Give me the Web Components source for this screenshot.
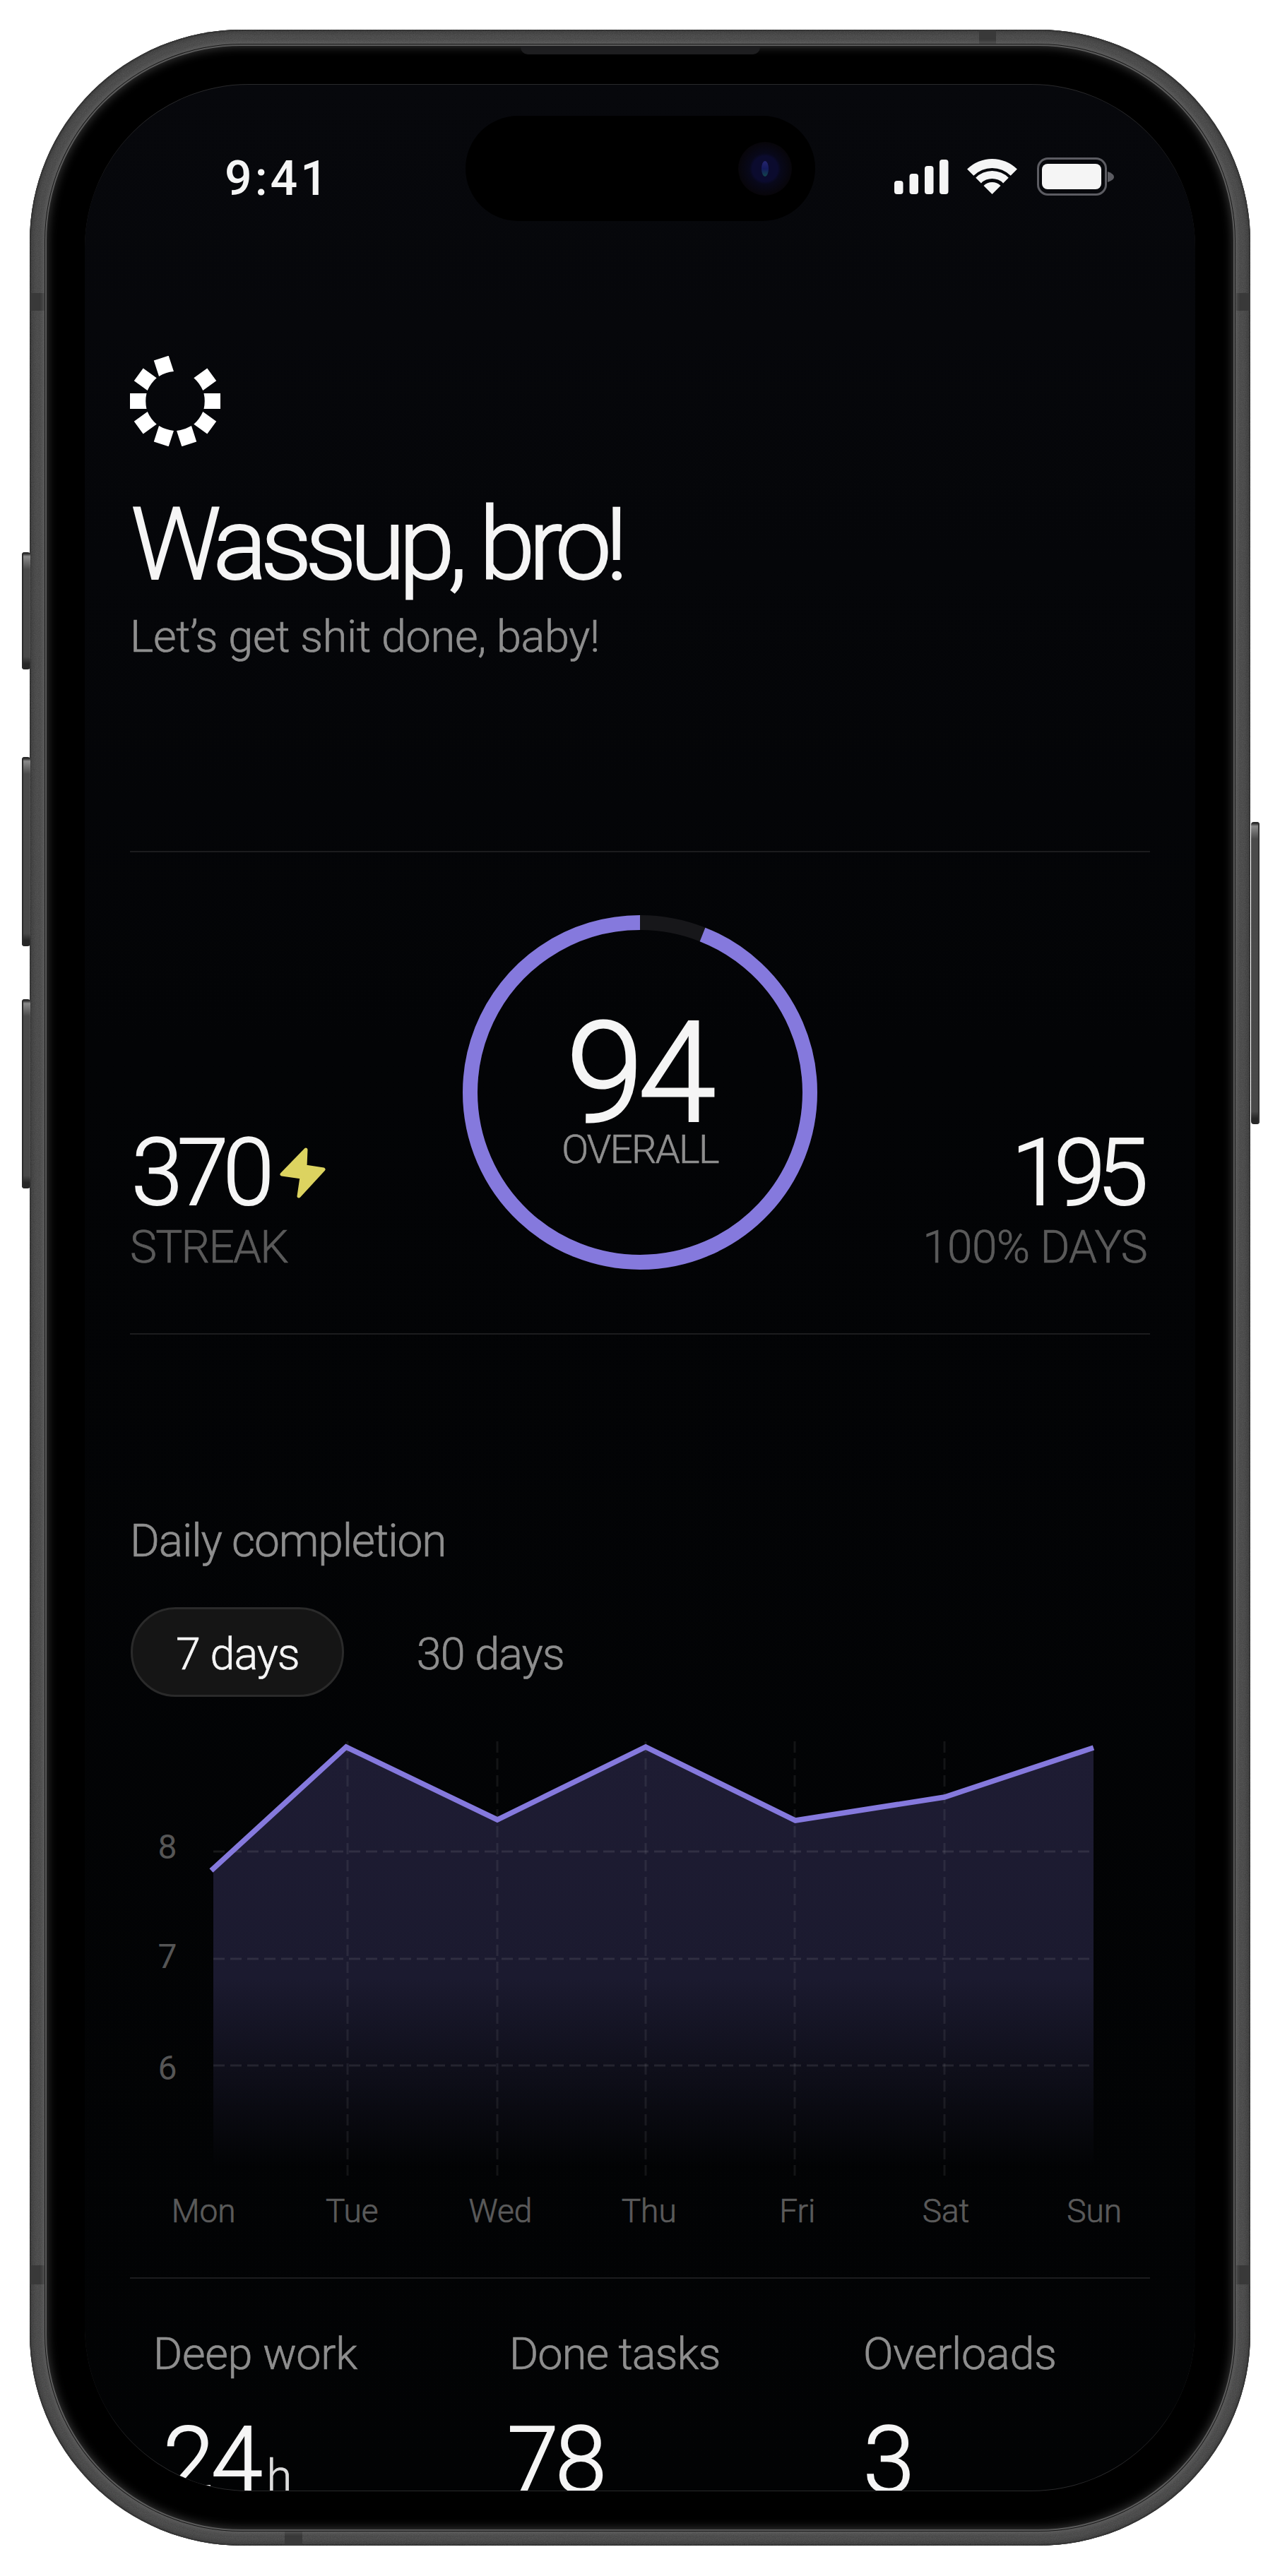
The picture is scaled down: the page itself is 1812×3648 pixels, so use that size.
<!DOCTYPE html>
<html lang="en">
<head>
<meta charset="utf-8">
<title>Daily</title>
<style>
  html, body { margin: 0; background: #fff; }
  body { font-family: Roboto, "Liberation Sans", sans-serif; font-weight: 300; color: #f5f5f5; }
  svg[slot] { display: block; }
</style>
</head>
<body>

<phone-frame>
  <status-bar></status-bar>
  <app-header>
    <span slot="title">Wassup, bro!</span>
    <span slot="subtitle">Let’s get shit done, baby!</span>
  </app-header>
  <score-panel>
    <stat-block slot="left">
      <span slot="value">370</span>
      <svg slot="icon" width="65" height="72" viewBox="0 0 65 72"><path d="M37 3 3 38 31 42 27 69 62 31 36 27Z" fill="#dcd360" stroke="#dcd360" stroke-width="5" stroke-linejoin="round"/></svg>
      <span slot="label">STREAK</span>
    </stat-block>
    <score-ring value="94" label="OVERALL"></score-ring>
    <stat-block slot="right" align="right">
      <span slot="value" style="letter-spacing:-0.09em">195</span>
      <span slot="label" style="letter-spacing:-0.01em;margin-right:-10px">100% DAYS</span>
    </stat-block>
  </score-panel>
  <completion-chart></completion-chart>
  <summary-row>
    <summary-stat>
      <span slot="label">Deep work</span>
      <span slot="value" style="margin-left:14px">24</span>
      <span slot="unit">h</span>
      <value-mask slot="mask"></value-mask>
    </summary-stat>
    <summary-stat>
      <span slot="label" style="letter-spacing:-0.015em">Done tasks</span>
      <span slot="value" style="margin-left:-3px">78</span>
    </summary-stat>
    <summary-stat>
      <span slot="label">Overloads</span>
      <span slot="value">3</span>
    </summary-stat>
  </summary-row>
</phone-frame>

<script>
class PhoneFrame extends HTMLElement {
  constructor() {
    super();
    this.attachShadow({ mode: 'open' });
    this.shadowRoot.innerHTML = `
      <style>
        :host {
          display: block;
          position: relative;
          box-sizing: border-box;
          width: 1728px;
          height: 3563px;
          margin: 42px 0 0 42px;
          padding: 21px 22px;
          border-radius: 300px;
          background: #454545;
          box-shadow: inset 0 0 0 2px #2b2b2b, inset 0 0 6px 5px #363636;
        }
        .grain {
          position: absolute;
          inset: 0;
          width: 100%;
          height: 100%;
          opacity: 0.16;
          clip-path: inset(0 round 300px);
        }
        .bezel {
          box-sizing: border-box;
          position: relative;
          height: 100%;
          padding: 56px;
          border-radius: 278px;
          background: #000;
          box-shadow: 0 0 0 1px #1a1a1a, 0 0 4px 4px rgba(105, 105, 105, 0.5), inset 0 0 0 2px #5a5a5a, inset 0 0 14px 3px #3a3a3a;
        }
        .screen {
          box-sizing: border-box;
          position: relative;
          height: 3409px;
          padding: 0 64px;
          overflow: hidden;
          border-radius: 232px;
          border-top: 1px solid #2a2a2c;
          border-bottom: 1px solid #2a2a2c;
          background: linear-gradient(#07080c, #030406 40%, #020304);
        }
        .slot-top {
          position: absolute;
          left: 695px;
          top: 23px;
          width: 339px;
          height: 12px;
          border-radius: 0 0 10px 10px;
          background: #1e1e20;
        }
        .island {
          position: absolute;
          left: 539px;
          top: 44px;
          width: 495px;
          height: 149px;
          border-radius: 75px;
          background: #000;
        }
        .camera {
          position: absolute;
          right: 33px;
          top: 37px;
          width: 76px;
          height: 76px;
          border-radius: 50%;
          background: radial-gradient(circle, #0b0b2e 0 18px, #08081a 22px, #070509 38px);
        }
        .camera::after {
          content: "";
          position: absolute;
          left: 33px;
          top: 27px;
          width: 10px;
          height: 22px;
          border-radius: 50%;
          background: linear-gradient(#25256e, #141a5c 50%, #12464a);
        }
        .band {
          position: absolute;
          background: #393939;
        }
        .btn {
          position: absolute;
          width: 12px;
          border-radius: 4px;
          background: linear-gradient(#2a2a2a 0 2px, #8a8a8a 6px, #4a4a4a 24px, #484848 calc(100% - 18px), #262626 calc(100% - 8px));
          box-shadow: inset 2px 0 0 #2a2a2a;
        }
        .btn.l { left: -11px; }
        .btn.r { right: -13px; box-shadow: inset -2px 0 0 #333; }
      </style>
      <i class="btn l" style="top:740px;height:166px"></i>
      <i class="btn l" style="top:1030px;height:268px"></i>
      <i class="btn l" style="top:1373px;height:268px"></i>
      <i class="btn r" style="top:1122px;height:428px"></i>
      <svg class="grain" aria-hidden="true">
        <filter id="noise"><feTurbulence type="fractalNoise" baseFrequency="0.8" numOctaves="2"/><feColorMatrix type="saturate" values="0"/></filter>
        <rect width="100%" height="100%" filter="url(#noise)"/>
      </svg>
      <i class="band" style="left:0;top:373px;width:22px;height:25px"></i>
      <i class="band" style="right:0;top:373px;width:20px;height:25px"></i>
      <i class="band" style="left:0;top:3166px;width:22px;height:27px"></i>
      <i class="band" style="right:0;top:3166px;width:20px;height:27px"></i>
      <i class="band" style="left:1344px;top:0;width:24px;height:21px"></i>
      <i class="band" style="left:361px;bottom:0;width:25px;height:21px"></i>
      <div class="bezel">
        <div class="screen">
          <div class="island"><div class="camera"></div></div>
          <slot></slot>
        </div>
      </div>
      <div class="slot-top"></div>
    `;
  }
}

class StatusBar extends HTMLElement {
  constructor() {
    super();
    this.attachShadow({ mode: 'open' });
    this.shadowRoot.innerHTML = `
      <style>
        :host {
          display: flex;
          position: relative;
          justify-content: space-between;
          align-items: flex-start;
          height: 66px;
          padding: 100px 51px 0 134px;
        }
        .time {
          font-size: 68px;
          line-height: 66px;
          font-weight: 500;
          letter-spacing: 4px;
        }
        svg { display: block; }
      </style>
      <div class="time">9:41</div>
      <svg width="311" height="58" viewBox="1266 220 311 58" fill="#f5f5f5">
        <rect x="1266" y="256" width="12.5" height="19" rx="4"/>
        <rect x="1287.5" y="246" width="12.5" height="29" rx="4"/>
        <rect x="1309" y="235" width="12.5" height="40" rx="4"/>
        <rect x="1330" y="226" width="12.5" height="49" rx="4"/>
        <path d="M1369.100 239.600A50 50 0 0 1 1439.900 239.600L1430.700 248.800A37 37 0 0 0 1378.300 248.800Z"/>
        <path d="M1381.200 251.700A33 33 0 0 1 1427.800 251.700L1420.100 259.400A22 22 0 0 0 1388.900 259.400Z"/>
        <path d="M1392.500 263A17 17 0 0 1 1416.500 263L1404.500 275Z"/>
        <rect x="1469.500" y="224.500" width="96" height="51" rx="14" fill="none" stroke="#5c5c62" stroke-width="3"/>
        <rect x="1475" y="232" width="84" height="36" rx="8"/>
        <path d="M1568 243Q1577 246 1577 250.500Q1577 255 1568 258Z" fill="#5c5c62"/>
      </svg>
    `;
  }
}

class AppHeader extends HTMLElement {
  constructor() {
    super();
    this.attachShadow({ mode: 'open' });
    const segments = [-162, -126, -90, -54, -18, 54, 90, 126, 162]
      .map(a => `<path transform="rotate(${a})" d="M-11-64H11V-40.500Q0-43-11-40.500Z"/>`)
      .join('');
    this.shadowRoot.innerHTML = `
      <style>
        :host {
          display: block;
          padding-top: 218px;
          padding-bottom: 268px;
        }
        svg { display: block; }
        .title {
          margin: 64px 0 0 1px;
          font-size: 143px;
          line-height: 150px;
          letter-spacing: -0.065em;
          white-space: nowrap;
          -webkit-text-stroke: 2px;
        }
        .subtitle {
          margin-top: 21px;
          font-size: 63px;
          line-height: 70px;
          letter-spacing: -0.005em;
          color: #8e8e8e;
          white-space: nowrap;
          -webkit-text-stroke: 0.7px;
        }
      </style>
      <svg width="128" height="128" viewBox="-64 -64 128 128" fill="#fff">${segments}</svg>
      <div class="title"><slot name="title"></slot></div>
      <div class="subtitle"><slot name="subtitle"></slot></div>
    `;
  }
}

class ScorePanel extends HTMLElement {
  constructor() {
    super();
    this.attachShadow({ mode: 'open' });
    this.shadowRoot.innerHTML = `
      <style>
        :host {
          display: grid;
          grid-template-columns: 1fr 502px 1fr;
          align-items: end;
          padding: 89px 0 86px;
          border-top: 2px solid #1c1c1e;
          border-bottom: 2px solid #1c1c1e;
        }
      </style>
      <slot name="left"></slot>
      <slot></slot>
      <slot name="right"></slot>
    `;
  }
}

class StatBlock extends HTMLElement {
  constructor() {
    super();
    this.attachShadow({ mode: 'open' });
    this.shadowRoot.innerHTML = `
      <style>
        :host {
          display: flex;
          flex-direction: column;
          align-items: flex-start;
        }
        :host([align="right"]) {
          align-items: flex-end;
          padding-right: 14px;
        }
        .top {
          display: flex;
          align-items: center;
          gap: 16px;
          margin-left: 2px;
          font-size: 131px;
          line-height: 128px;
          letter-spacing: -0.06em;
          -webkit-text-stroke: 2px;
        }
        .label {
          margin-top: 7px;
          font-size: 64px;
          line-height: 70px;
          letter-spacing: -0.028em;
          color: #5a5a5a;
          white-space: nowrap;
          -webkit-text-stroke: 0.7px;
        }
      </style>
      <div class="top"><slot name="value"></slot><slot name="icon"></slot></div>
      <div class="label"><slot name="label"></slot></div>
    `;
  }
}

class ScoreRing extends HTMLElement {
  constructor() {
    super();
    this.attachShadow({ mode: 'open' });
    const value = Number(this.getAttribute('value'));
    const label = this.getAttribute('label');
    this.shadowRoot.innerHTML = `
      <style>
        :host {
          display: grid;
          width: 502px;
          height: 502px;
          margin-bottom: 4px;
        }
        svg, .text { grid-area: 1 / 1; }
        svg { display: block; }
        .text {
          justify-self: center;
          padding-top: 149px;
          text-align: center;
        }
        .value {
          margin-left: -5px;
          font-size: 198px;
          line-height: 150px;
          letter-spacing: -0.04em;
          -webkit-text-stroke: 3px;
        }
        .label {
          margin-top: 5px;
          font-size: 56px;
          line-height: 56px;
          letter-spacing: -0.03em;
          color: #8e8e8e;
          -webkit-text-stroke: 0.7px;
        }
      </style>
      <svg width="502" height="502" viewBox="0 0 502 502" fill="none" stroke-width="21">
        <circle cx="251" cy="251" r="240.500" stroke="#17171a"/>
        <circle cx="251" cy="251" r="240.500" stroke="#8579dd" pathLength="100"
          stroke-dasharray="${value} ${100 - value}" transform="rotate(-68.400 251 251)"/>
      </svg>
      <div class="text">
        <div class="value">${value}</div>
        <div class="label">${label}</div>
      </div>
    `;
  }
}

class RangeTabs extends HTMLElement {
  constructor() {
    super();
    this.attachShadow({ mode: 'open' });
    this.shadowRoot.innerHTML = `
      <style>
        :host {
          display: flex;
          gap: 39px;
          margin-left: 1px;
          font-size: 63px;
          letter-spacing: -0.015em;
          -webkit-text-stroke: 0.7px;
        }
        .tab {
          box-sizing: border-box;
          display: flex;
          align-items: center;
          height: 127px;
          padding: 6px 60px 0 61px;
          border: 3px solid transparent;
          border-radius: 64px;
          color: #8e8e8e;
        }
        .tab.active {
          background: #151515;
          border-color: #2a2a2a;
          color: #f5f5f5;
        }
      </style>
      <div class="tab active">7 days</div>
      <div class="tab">30 days</div>
    `;
  }
}

class CompletionChart extends HTMLElement {
  constructor() {
    super();
    this.attachShadow({ mode: 'open' });
    const days = ['Mon', 'Tue', 'Wed', 'Thu', 'Fri', 'Sat', 'Sun'];
    const cols = [492, 704, 914, 1125, 1337];
    const rows = [2622, 2774, 2925];
    const yLabels = [['8', 2632], ['7', 2787], ['6', 2945]];
    this.shadowRoot.innerHTML = `
      <style>
        :host {
          display: block;
          padding-top: 258px;
        }
        .title {
          font-size: 64px;
          line-height: 70px;
          letter-spacing: -0.018em;
          color: #8e8e8e;
          margin-bottom: 58px;
          -webkit-text-stroke: 0.7px;
        }
        svg {
          display: block;
          margin-top: 57px;
        }
        text {
          font-size: 48px;
          font-weight: 400;
          fill: #555;
          text-anchor: middle;
        }
        .days {
          display: grid;
          grid-template-columns: repeat(7, 210.2px);
          margin: 15px 0 0 -1px;
          font-size: 46px;
          line-height: 52px;
          color: #5a5a5a;
          text-align: center;
          -webkit-text-stroke: 0.7px;
        }
      </style>
      <div class="title">Daily completion</div>
      <range-tabs></range-tabs>
      <svg width="1444" height="630" viewBox="184 2460 1444 630">
        <defs>
          <linearGradient id="area" gradientUnits="userSpaceOnUse" x1="0" y1="2474" x2="0" y2="3068">
            <stop offset="0" stop-color="#1e1c33"/>
            <stop offset="0.55" stop-color="#1b1a2f"/>
            <stop offset="1" stop-color="#1b1a2f" stop-opacity="0"/>
          </linearGradient>
        </defs>
        <polygon points="302,2647 490,2474 704,2577 914,2474 1126,2578 1337,2545 1548,2475 1548,3068 302,3068" fill="url(#area)"/>
        <g stroke="#fff" stroke-opacity="0.09" stroke-width="3" stroke-dasharray="16 8">
          ${rows.map(y => `<line x1="302" y1="${y}" x2="1548" y2="${y}"/>`).join('')}
        </g>
        <g stroke="#fff" stroke-opacity="0.07" stroke-width="3" stroke-dasharray="16 8">
          ${cols.map(x => `<line x1="${x}" y1="2466" x2="${x}" y2="3081"/>`).join('')}
        </g>
        <polyline points="299,2649 490,2474 704,2577 914,2474 1126,2578 1337,2545 1548,2475" fill="none" stroke="#8579dd" stroke-width="7.500"/>
        ${yLabels.map(([t, y]) => `<text x="237" y="${y}">${t}</text>`).join('')}
      </svg>
      <div class="days">${days.map(d => `<span>${d}</span>`).join('')}</div>
    `;
  }
}

class SummaryRow extends HTMLElement {
  constructor() {
    super();
    this.attachShadow({ mode: 'open' });
    this.shadowRoot.innerHTML = `
      <style>
        :host {
          display: grid;
          grid-template-columns: 504px 501px 1fr;
          margin-top: 68px;
          padding: 72px 0 0 33px;
          border-top: 2px solid #1c1c1e;
        }
      </style>
      <slot></slot>
    `;
  }
}

class SummaryStat extends HTMLElement {
  constructor() {
    super();
    this.attachShadow({ mode: 'open' });
    this.shadowRoot.innerHTML = `
      <style>
        :host {
          display: block;
          position: relative;
        }
        .label {
          font-size: 63px;
          line-height: 70px;
          letter-spacing: -0.005em;
          color: #8e8e8e;
          -webkit-text-stroke: 0.7px;
        }
        .value {
          margin-top: 52px;
          font-size: 131px;
          line-height: 128px;
          letter-spacing: -0.035em;
          white-space: nowrap;
          -webkit-text-stroke: 2px;
        }
        .unit {
          margin-left: 10px;
          font-size: 66px;
          letter-spacing: 0;
          color: #dcdcdc;
          -webkit-text-stroke: 0.7px;
        }
      </style>
      <div class="label"><slot name="label"></slot></div>
      <div class="value"><slot name="value"></slot><span class="unit"><slot name="unit"></slot></span></div>
      <slot name="mask"></slot>
    `;
  }
}

// covers the foot of the 2, which the reference loses at the screen edge
class ValueMask extends HTMLElement {
  constructor() {
    super();
    this.attachShadow({ mode: 'open' });
    this.shadowRoot.innerHTML = `
      <style>
        :host {
          position: absolute;
          left: 8px;
          top: 213px;
          width: 73px;
          height: 20px;
          background: #020304;
        }
        :host::after {
          content: "";
          position: absolute;
          left: 58px;
          top: 7px;
          width: 15px;
          height: 3px;
          background: #f5f5f5;
        }
      </style>
    `;
  }
}

customElements.define('phone-frame', PhoneFrame);
customElements.define('status-bar', StatusBar);
customElements.define('app-header', AppHeader);
customElements.define('score-panel', ScorePanel);
customElements.define('stat-block', StatBlock);
customElements.define('score-ring', ScoreRing);
customElements.define('range-tabs', RangeTabs);
customElements.define('completion-chart', CompletionChart);
customElements.define('summary-row', SummaryRow);
customElements.define('summary-stat', SummaryStat);
customElements.define('value-mask', ValueMask);
</script>
</body>
</html>
